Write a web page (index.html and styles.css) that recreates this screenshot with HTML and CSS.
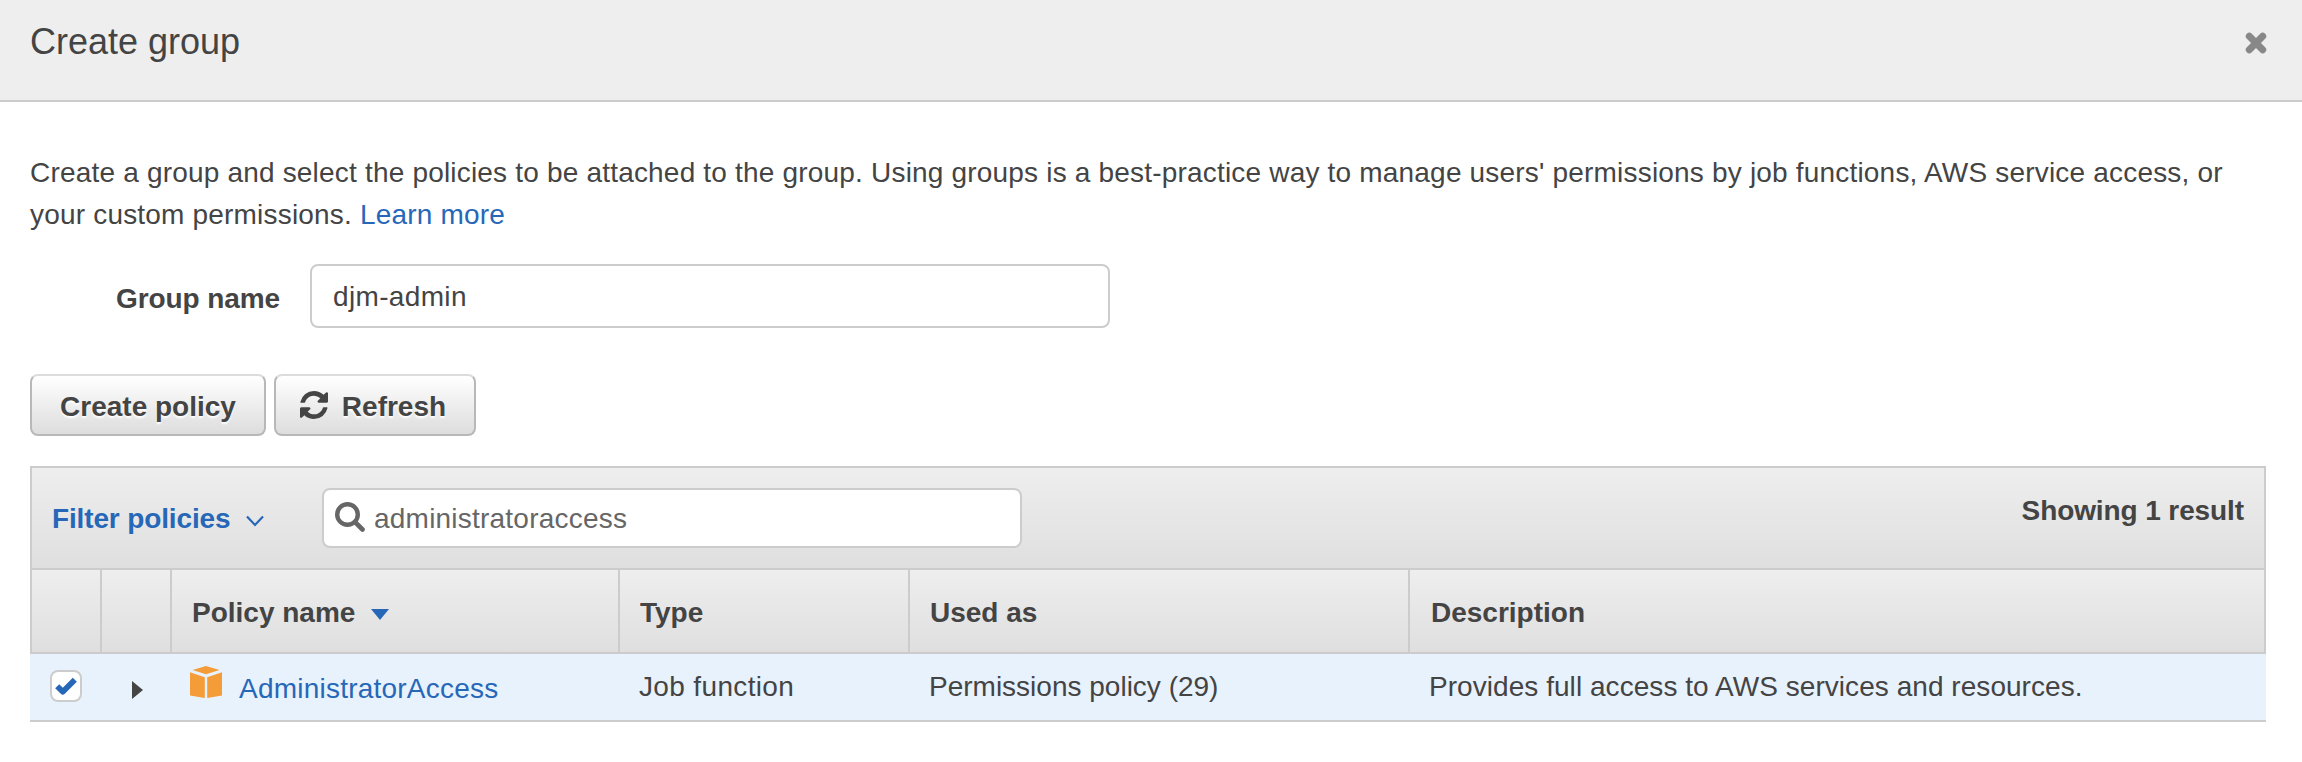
FILE: index.html
```html
<!DOCTYPE html>
<html lang="en">
<head>
<meta charset="utf-8">
<title>Create group</title>
<link rel="stylesheet" href="styles.css">
</head>
<body>
<header class="modal-header">
  <h1 class="title">Create group</h1>
  <svg class="close" viewBox="0 0 22 22"><path d="M4.300 4.300 17.700 17.700M17.700 4.300 4.300 17.700" stroke="#888" stroke-width="7" stroke-linecap="round"/></svg>
</header>
<main class="content">
  <p class="intro"><span class="line">Create a group and select the policies to be attached to the group. Using groups is a best-practice way to manage users' permissions by job functions, AWS service access, or</span><br>your custom permissions. <a class="link">Learn more</a></p>
  <div class="field">
    <label class="label">Group name</label>
    <div class="input">djm-admin</div>
  </div>
  <div class="actions">
    <button class="btn btn-policy">Create policy</button>
    <button class="btn btn-refresh"><svg class="refresh" viewBox="0 0 1536 1536"><path fill="#444" d="M1511 928q0 5-1 7-64 268-268 434.500T764 1536q-146 0-282.500-55T238 1324l-129 129q-19 19-45 19t-45-19-19-45V960q0-26 19-45t45-19h448q26 0 45 19t19 45-19 45l-137 137q71 66 161 102t187 36q134 0 250-65t186-179q11-17 53-117 8-23 30-23h192q13 0 22.500 9.500t9.500 22.500zm25-800v448q0 26-19 45t-45 19h-448q-26 0-45-19t-19-45 19-45l138-138Q969 256 768 256q-134 0-250 65T332 500q-11 17-53 117-8 23-30 23H50q-13 0-22.500-9.500T18 608v-7q65-268 270-434.500T768 0q146 0 284 55.500T1297 212l130-129q19-19 45-19t45 19 19 45z"/></svg><span>Refresh</span></button>
  </div>
  <section class="table">
    <div class="toolbar">
      <div class="filter"><span>Filter policies</span><svg class="chevron" viewBox="0 0 18 12"><path d="M1 1.500 9 10 17 1.500" fill="none" stroke="#2767b8" stroke-width="2.200"/></svg></div>
      <div class="search"><svg class="magnifier" viewBox="0 0 30 30"><circle cx="12.500" cy="12.500" r="10.300" fill="none" stroke="#666" stroke-width="4.400"/><path d="M20 20 27.500 27.500" stroke="#666" stroke-width="4.600" stroke-linecap="round"/></svg><span>administratoraccess</span></div>
      <div class="count">Showing 1 result</div>
    </div>
    <div class="row head">
      <div class="cell"></div>
      <div class="cell"></div>
      <div class="cell"><span>Policy name</span><svg class="sort" viewBox="0 0 18 11"><path d="M0 0H18L9 11Z" fill="#2767b8"/></svg></div>
      <div class="cell">Type</div>
      <div class="cell">Used as</div>
      <div class="cell">Description</div>
    </div>
    <div class="row data">
      <div class="cell pick"><span class="checkbox"><svg class="tick" viewBox="0 0 24 20"><path d="M3.200 10.200 8.800 15.700 20.800 3.800" fill="none" stroke="#2767b8" stroke-width="5.800" stroke-linejoin="round"/></svg></span></div>
      <div class="cell expand"><svg class="arrow" viewBox="0 0 11 18"><path d="M0 0 11 9 0 18Z" fill="#444"/></svg></div>
      <div class="cell name"><svg class="cube" viewBox="0 0 32 32"><path fill="#f39c38" d="M16 0 29.500 4 16 8.300 2.500 4ZM0 6.300 14.800 11.300V32L0 29.500ZM32 6.300 17.200 11.300V32L32 29.500Z"/></svg><a class="link">AdministratorAccess</a></div>
      <div class="cell type">Job function</div>
      <div class="cell used">Permissions policy (29)</div>
      <div class="cell description">Provides full access to AWS services and resources.</div>
    </div>
  </section>
</main>
</body>
</html>
```
FILE: styles.css
```css
* { box-sizing: border-box; }
body {
  margin: 0;
  background: #fff;
  color: #444;
  font: 28px/42px "Liberation Sans", Arial, sans-serif;
}
svg { display: block; flex: none; }
.modal-header {
  display: flex;
  justify-content: space-between;
  height: 102px;
  padding: 20px 35px 0 30px;
  background: #eee;
  border-bottom: 2px solid #ccc;
}
.title { margin: 0; font-size: 36px; font-weight: 400; line-height: 44px; }
.close { width: 22px; height: 22px; margin-top: 12px; }
.content { padding: 50px 36px 0 30px; }
.intro { margin: 0; white-space: nowrap; letter-spacing: 0.19px; }
.link { color: #2767b8; }
.field { display: flex; align-items: center; gap: 30px; margin-top: 28px; }
.label { width: 250px; padding-top: 5px; text-align: right; font-weight: 700; letter-spacing: -0.1px; }
.input {
  width: 800px;
  height: 64px;
  padding: 10px 21px;
  border: 2px solid #ccc;
  border-radius: 8px;
  letter-spacing: 0.35px;
}
.actions { display: flex; gap: 8px; margin-top: 46px; }
.btn {
  display: flex;
  align-items: center;
  justify-content: center;
  height: 62px;
  padding: 3px 0 0;
  border: 2px solid #b8b8b8;
  border-top-color: #dcdcdc;
  border-radius: 8px;
  background: linear-gradient(#fff, #ddd);
  color: #444;
  font: 700 28px/42px "Liberation Sans", Arial, sans-serif;
  text-shadow: 0 2px 2px #fff;
}
.btn-policy { width: 236px; }
.btn-refresh { width: 202px; gap: 14px; padding-right: 4px; }
.refresh { width: 28px; height: 28px; margin-top: -4px; }
.table { margin-top: 30px; }
.toolbar {
  display: flex;
  height: 104px;
  padding: 20px;
  border: 2px solid #ccc;
  background: linear-gradient(#eee, #dfdfdf);
}
.filter {
  display: flex;
  align-items: center;
  gap: 16px;
  width: 270px;
  height: 60px;
  padding-top: 1px;
  color: #2767b8;
  font-weight: 700;
  letter-spacing: -0.14px;
}
.chevron { width: 18px; height: 12px; margin-top: 4px; }
.search {
  display: flex;
  align-items: center;
  gap: 9px;
  width: 700px;
  height: 60px;
  padding: 1px 0 0 11px;
  border: 2px solid #ccc;
  border-radius: 8px;
  background: #fff;
  color: #666;
  letter-spacing: 0.22px;
}
.magnifier { width: 30px; height: 30px; margin-top: -3px; }
.count { margin-left: auto; padding-top: 2px; font-weight: 700; letter-spacing: -0.1px; }
.row { display: grid; grid-template-columns: 72px 70px 448px 290px 500px 1fr; }
.head {
  height: 84px;
  border-right: 2px solid #ccc;
  border-bottom: 2px solid #ccc;
  background: linear-gradient(#eee, #dfdfdf);
  font-weight: 700;
}
.head .cell { display: flex; align-items: center; padding: 4px 0 0 20px; border-right: 2px solid #ccc; }
.head .cell:first-child { border-left: 2px solid #ccc; }
.head .cell:last-child { padding-left: 21px; border-right: 0; }
.sort { width: 18px; height: 11px; margin: 3px 0 0 16px; }
.data { height: 68px; border-bottom: 2px solid #ccc; background: #e8f2fd; }
.data .cell { padding: 12px 0 0 19px; }
.data .pick { padding: 16px 0 0 20px; }
.checkbox {
  display: flex;
  align-items: center;
  justify-content: center;
  width: 32px;
  height: 32px;
  border: 2px solid #ccc;
  border-radius: 8px;
  background: #fff;
}
.tick { width: 24px; height: 20px; }
.data .expand { padding: 27px 0 0 30px; }
.arrow { width: 11px; height: 18px; }
.data .name { display: flex; gap: 17px; padding-left: 18px; }
.name .link { padding-top: 2px; letter-spacing: 0.22px; }
.cube { width: 32px; height: 32px; }
.type { letter-spacing: 0.35px; }
.description { letter-spacing: 0.05px; }
```
